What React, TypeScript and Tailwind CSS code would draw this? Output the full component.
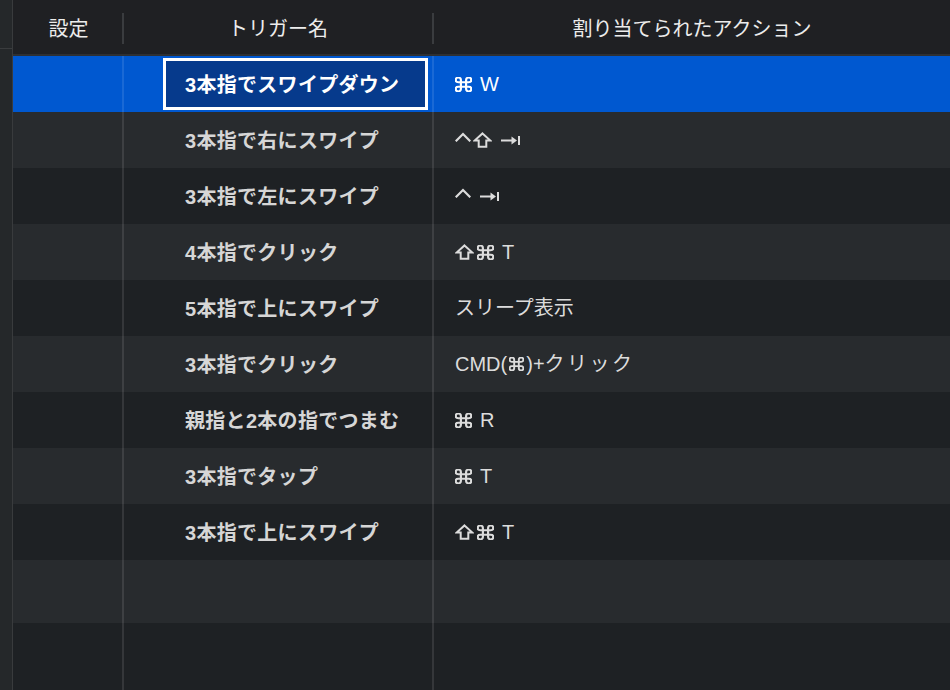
import React from "react";

type IconProps = { className?: string };

function Cmd({ className = "", w = 17, h = 15 }: IconProps & { w?: number; h?: number }) {
  return (
    <svg
      className={`shrink-0 ${className}`}
      width={w}
      height={h}
      viewBox="2.2 2.2 19.6 19.6"
      preserveAspectRatio="none"
      fill="none"
      stroke="currentColor"
      strokeWidth={2.5}
      strokeLinecap="round"
      strokeLinejoin="round"
    >
      <path d="M15 6v12a3 3 0 1 0 3-3H6a3 3 0 1 0 3 3V6a3 3 0 1 0-3 3h12a3 3 0 1 0-3-3" />
    </svg>
  );
}

function Ctrl({ className = "" }: IconProps) {
  return (
    <svg
      className={`shrink-0 -translate-y-[3px] ${className}`}
      width={16}
      height={10}
      viewBox="0 0 16 10"
      fill="none"
      stroke="currentColor"
      strokeWidth={2.2}
      strokeLinecap="square"
      strokeLinejoin="miter"
    >
      <path d="M1.5 8.5 L8 2 L14.5 8.5" />
    </svg>
  );
}

function Shift({ className = "" }: IconProps) {
  return (
    <svg
      className={`shrink-0 ${className}`}
      width={19}
      height={16}
      viewBox="0 0 19 16"
      fill="none"
      stroke="currentColor"
      strokeWidth={2}
      strokeLinejoin="miter"
    >
      <path d="M9.5 1.4 L17.4 8.6 H13.3 V14.8 H5.7 V8.6 H1.6 Z" />
    </svg>
  );
}

function Tab({ className = "" }: IconProps) {
  return (
    <svg
      className={`shrink-0 ${className}`}
      width={19}
      height={9}
      viewBox="0 0 19 9"
      fill="currentColor"
    >
      <rect x="0" y="3.5" width="12" height="2" />
      <path d="M10.5 0.6 L16 4.5 L10.5 8.4 Z" />
      <rect x="17" y="0" width="2" height="9" />
    </svg>
  );
}

const rows: { trigger: string; action: React.ReactNode }[] = [
  {
    trigger: "3本指でスワイプダウン",
    action: (
      <>
        <Cmd />
        <span className="ml-[8px]">W</span>
      </>
    ),
  },
  {
    trigger: "3本指で右にスワイプ",
    action: (
      <>
        <Ctrl />
        <Shift className="ml-[2px]" />
        <Tab className="ml-[9px]" />
      </>
    ),
  },
  {
    trigger: "3本指で左にスワイプ",
    action: (
      <>
        <Ctrl />
        <Tab className="ml-[9px]" />
      </>
    ),
  },
  {
    trigger: "4本指でクリック",
    action: (
      <>
        <Shift />
        <Cmd className="ml-[3px]" />
        <span className="ml-[8px]">T</span>
      </>
    ),
  },
  { trigger: "5本指で上にスワイプ", action: <span>スリープ表示</span> },
  {
    trigger: "3本指でクリック",
    action: (
      <>
        <span>CMD(</span>
        <Cmd className="mx-[2px]" w={15} h={14} />
        <span>)+</span>
        <span className="tracking-[2.5px]">クリック</span>
      </>
    ),
  },
  {
    trigger: "親指と2本の指でつまむ",
    action: (
      <>
        <Cmd />
        <span className="ml-[8px]">R</span>
      </>
    ),
  },
  {
    trigger: "3本指でタップ",
    action: (
      <>
        <Cmd />
        <span className="ml-[8px]">T</span>
      </>
    ),
  },
  {
    trigger: "3本指で上にスワイプ",
    action: (
      <>
        <Shift />
        <Cmd className="ml-[3px]" />
        <span className="ml-[8px]">T</span>
      </>
    ),
  },
];

const font = {
  fontFamily:
    '"Liberation Sans", "Noto Sans CJK JP", "DejaVu Sans", sans-serif',
};

export default function App() {
  return (
    <div
      className="flex w-[950px] h-[690px] overflow-hidden bg-[#1e2124]"
      style={font}
    >
      {/* left strip */}
      <div className="w-[13px] shrink-0 flex flex-col bg-[#25282a] border-r border-[#393b3d]">
        <div className="h-[49px] border-b border-[#3a3c3e]" />
      </div>

      <div className="flex-1 flex flex-col min-w-0">
        {/* header */}
        <div className="h-[56px] shrink-0 flex items-center pt-[3px] bg-[#1f2023] border-b-2 border-[#2e3033] text-[20px] text-[#ececec]">
          <div className="w-[109px] flex justify-center pl-[2px]">設定</div>
          <div className="w-[2px] h-[31px] bg-[#3a3c3f]" />
          <div className="w-[308px] flex justify-center">トリガー名</div>
          <div className="w-[2px] h-[31px] bg-[#3a3c3f]" />
          <div className="flex-1 flex justify-center">割り当てられたアクション</div>
        </div>

        {/* rows */}
        {rows.map((r, i) => {
          const selected = i === 0;
          const bg = selected
            ? "bg-[#0058d0]"
            : i % 2 === 1
            ? "bg-[#282b2e]"
            : "bg-[#1e2124]";
          return (
            <div key={i} className={`h-[56px] shrink-0 flex ${bg}`}>
              <div className="w-[109px]" />
              <div className="w-[2px] bg-white/10" />
              <div className="w-[308px] flex items-center">
                {selected ? (
                  <div className="ml-[39px] mr-[4px] my-[2px] self-stretch flex-1 flex items-center border-[3px] border-white bg-[#063a8c] pl-[19px] pt-[1px] text-[20px] font-bold text-white tracking-[0.3px]">
                    {r.trigger}
                  </div>
                ) : (
                  <div className="pl-[61px] pt-[2px] text-[20px] font-bold text-[#d6d6d6] tracking-[0.3px]">
                    {r.trigger}
                  </div>
                )}
              </div>
              <div className="w-[2px] bg-white/10" />
              <div
                className={`flex-1 flex items-center pl-[21px] text-[20px] leading-none ${
                  selected ? "text-white" : "text-[#dcdcdc]"
                }`}
              >
                {r.action}
              </div>
            </div>
          );
        })}

        {/* empty rows */}
        <div className="h-[63px] shrink-0 flex bg-[#282b2e]">
          <div className="w-[109px]" />
          <div className="w-[2px] bg-white/10" />
          <div className="w-[308px]" />
          <div className="w-[2px] bg-white/10" />
          <div className="flex-1" />
        </div>
        <div className="flex-1 flex bg-[#1e2124]">
          <div className="w-[109px]" />
          <div className="w-[2px] bg-white/10" />
          <div className="w-[308px]" />
          <div className="w-[2px] bg-white/10" />
          <div className="flex-1" />
        </div>
      </div>
    </div>
  );
}
